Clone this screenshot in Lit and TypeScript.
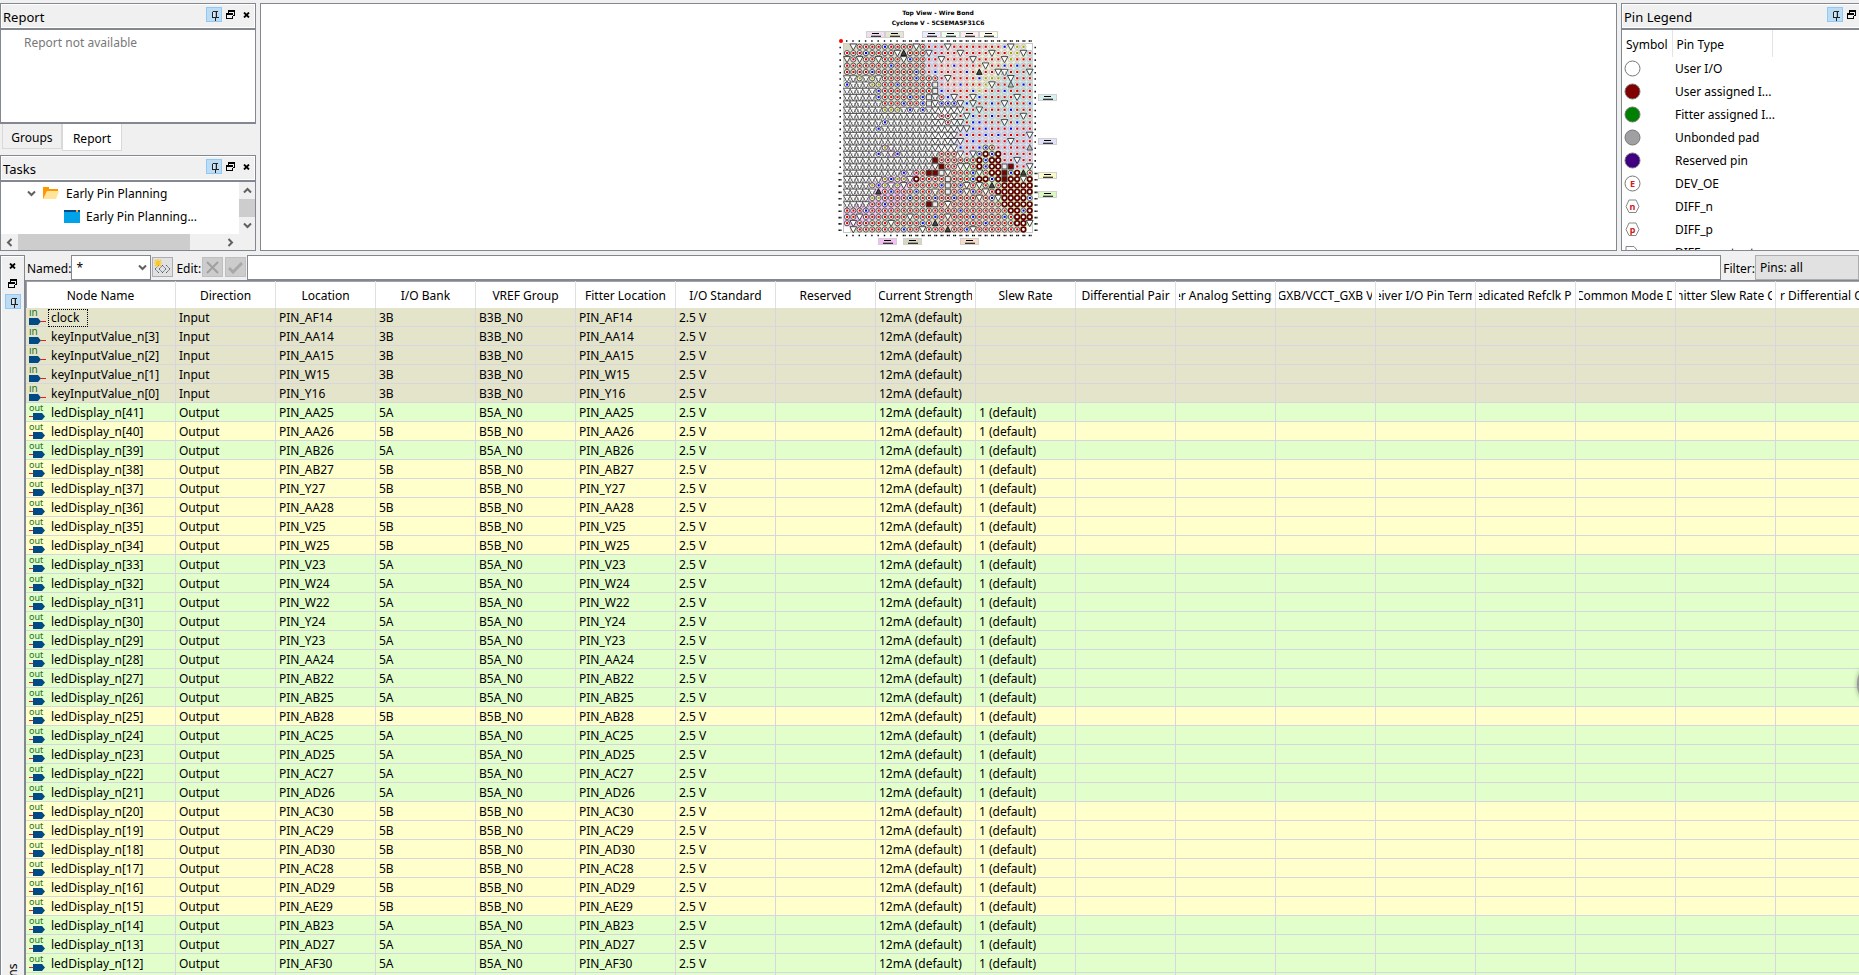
import { LitElement, html, svg, css } from "lit";
import { customElement } from "lit/decorators.js";

const pinIcon = html`<svg width="14" height="13" viewBox="0 0 14 13" shape-rendering="crispEdges">
  <path d="M5 3h5v6h-5z" fill="#9fb4c6"/><path d="M6 4h2v5h-2z" fill="#d6e8f7"/>
  <path d="M5 3h5M5 3v6M9 3v6M4 9h7M8 9v4" transform="translate(.5 .5)" fill="none" stroke="#222"/></svg>`;
const floatIcon = html`<svg width="9" height="9" viewBox="0 0 9 9" shape-rendering="crispEdges">
  <path d="M2 0h7v6h-3v-1h2v-3h-5v1h-1zM0 3h7v6h-7zM1 5v3h5v-3z" fill="#000" fill-rule="evenodd"/></svg>`;
const closeIcon = html`<svg width="7" height="6" viewBox="0 0 7 6">
  <path d="M1 .5l5 5M6 .5l-5 5" stroke="#000" stroke-width="1.8"/></svg>`;

const chevron = (d: string) =>
  html`<svg width="9" height="9" viewBox="0 0 9 9"><path d=${d} fill="none" stroke="#606060" stroke-width="2"/></svg>`;
const UP = "M1 6.5l3.5-3.5 3.5 3.5";
const DOWN = "M1 2.5l3.5 3.5 3.5-3.5";
const LEFT = "M6.5 1l-3.5 3.5 3.5 3.5";
const RIGHT = "M2.5 1l3.5 3.5-3.5 3.5";

const dockButtons = html`<div class="btns">
  <button class="pin" aria-label="Pin">${pinIcon}</button>
  <button aria-label="Float">${floatIcon}</button>
  <button aria-label="Close">${closeIcon}</button></div>`;

/* One character per ball of the package, row A first. */
const BALLS = [
  " vrrrrbrrrrvrrrrvrrrrrrrrbvyy ",
  "rrrbrrrrvkrrrvrrrrvrrrrvrryyvr",
  "vrvrrvrrrvbrrrrvrrrrvrrrrvyrrr",
  "rrrrrrrbrrrrrrrrrbrrrrvrrbrbrr",
  "rrrrbrrrrrrbrrbrrrrbrkrrvxrrrv",
  "xxyxyxrrrrrbrrrrvrrrrbyyyrvrrr",
  "bxxxyyrrbrrrrrsrrrbrrryvrr^rbr",
  "xxxxxbrrrrrrrrsbrrrrbyrrrbrrrr",
  "xxxxxbrrrrbrbsxrbvrrvbrrrrrvrr",
  "xxxxxxrrrbrrbsvbbbvbvrrbrvrrrb",
  "xxxxxxyyyxbxbxvvvvvrrvrrrrbrrr",
  "xxxxxxxxxxxxxxvrrvrvbrrbrrrrvr",
  "xxxxxxbxxxxxxxvvrvvrbbrrrvrbrr",
  "xxxxxbxxxxxxxxvvvvvvbrbrrrbrrr",
  "xxxxxxxxxxxxxxvvvvrbrrbrbrrrrv",
  "xxxxxxxxxxxxxxvxvvvrbrrrrrvrrr",
  "xxxxxxyxxxxxxxvvvvbrrbbrrrrrr^",
  "xxxxxbxxbxxxxxxrrrvrvbRbRrrrrr",
  "xxxxxxxxxxxxxxMrrrrrrRbRRrrvrr",
  "xxxxxxxxxxxxxxvMrrvvrRbRRsMrrv",
  "xxxxxxxxxbxrrMMsvrrrbvrRRMbRkr",
  "xxxxxxybyyxRrrrrsrrrbRRbRMRRvR",
  "xxxxybyxyvrrrrrbsrbvrvrkrRRRRR",
  "xxxxxkrbrrrbrrxrsrbvbrvrRRRRRR",
  "xxxxyyrrrrbrrrbrrbrrrvrbvRRRRb",
  "xxxxrrbrrrrrrMsrvrrrrrrrrRRRRR",
  "rrrbrrrrrrrrrrrrrrbrrrrrrrRRbR",
  "rrvrrrrrrrvrrrbrvrrrbrrrrbrRRR",
  "rvrrrrrvrrrrbrkrrrrrrrbrrrrRRv",
  " vrrrrrrrbrrvrrrkrrbvrrrrrrrR ",
];

/* I/O bank shading under each ball, same order. */
const BANKS = [
  "ggggggggggggglllpppppppcccccc ",
  "ggggggggggggglllppppppccccccct",
  "gggggggggggggllppppppcccccccct",
  "gggggggggggggllppppppccccccttt",
  "gggggggggggggllpppppcccccttttt",
  "wwgwgwggggggggwlppppccccctttt" + "t",
  "wwwwgggggggggwwlppppccccttttt" + "t",
  "wwwwwgggggggggwllpppccctttttt" + "t",
  "wwwwwggggggggwwwllppctttttttt" + "t",
  "wwwwwwggggggwwwwwwltttttttttt" + "t",
  "wwwwwwgggwwwwwwwwwwtttttttttt" + "t",
  "wwwwwwwwwwwwwwwwwwttttttttttt" + "t",
  "wwwwwwwwwwwwwwwwwwtttlltttttt" + "t",
  "wwwwwwwwwwwwwwwwwwllllllllllll",
  "wwwwwwwwwwwwwwwwwlllllllllllll",
  "wwwwwwwwwwwwwwwwwlllllllllllll",
  "wwwwwwvvwwwwwwwwwwlllleellllll",
  "wwwwwwwvvwwwwwwooowlleeeelllll",
  "wwwwwwwwwwwwwwoooooeeeeeelllll",
  "wwwwwwwwwwwwwwooooweeeeeelllll",
  "wwwwwwwwwvwvoooooooeeeeeeeeeee",
  "wwwwwwvvvvvvoooooooeeeeeeeeeee",
  "wwwwvvvvvvvgoooooooooeeeeeeeee",
  "wwwwwvvvvvggggooooooooooeeeeee",
  "wwwwvvvvvvggggooooooooooeeeeee",
  "wwvvvvvvvgggggooooooooooeeeeee",
  "vvvvvvvvggggggoooooooooooeeeee",
  "vvvvvvggggggggoooooooooooeeeee",
  "vvvvgggggggggggoooooooooooeeee",
  " ggggggggggggggoooooooooooooe ",
];
const TINT: Record<string, string> = {
  g: "#d9d9c6", w: "#fafafa", l: "#d6d6f2", p: "#f0dddd", c: "#eeeed8",
  t: "#c8e4e4", v: "#eebcee", o: "#edcfbc", e: "#d0ecb8",
};

const P = 6.3;
const ball = (c: string, x: number, y: number, bank: string) => {
  const soft = "lpct".includes(bank);
  const dot = (f: string) => svg`<circle cx=${x} cy=${y} r="2.6" fill="#fff" fill-opacity=${soft ? 0.55 : 0.9}
    stroke=${soft ? "#aaa" : "#555"} stroke-width=${soft ? 0.6 : 1}/>
    <rect x=${x - 0.9} y=${y - 1.1} width="2.1" height="2.1" fill=${f}/>`;
  switch (c) {
    case "r": return dot("#d40000");
    case "b": return dot("#0000e0");
    case "y": return dot("#a0a000");
    case "v": return svg`<path d="M${x - 3.4} ${y - 2.8}h6.8l-3.4 6.2z" fill="#fff" stroke="#333" stroke-width=".9"/>`;
    case "^": return svg`<path d="M${x - 2.8} ${y + 2.4}h5.6l-2.8-5.4z" fill="#bbb" stroke="#444" stroke-width=".9"/>`;
    case "k": return svg`<path d="M${x - 2.8} ${y + 2.4}h5.6l-2.8-5.4z" fill="#444" stroke="#111" stroke-width=".9"/>`;
    case "x": return svg`<path d="M${x - 3.6} ${y - 2.6}h7.2l-3.6 6.6z" fill="#fff" stroke="#3a3a3a" stroke-width=".8"/>
      <path d="M${x - 3} ${y + 3.2}l2-3.6M${x + 3} ${y + 3.2}l-2-3.6" stroke="#555" stroke-width=".6"/>`;
    case "s": return svg`<rect x=${x - 2.5} y=${y - 2.5} width="5" height="5" fill="#eee" stroke="#444" stroke-width=".9"/>`;
    case "M": return svg`<rect x=${x - 2.5} y=${y - 2.5} width="5" height="5" fill="#800000" stroke="#333" stroke-width=".9"/>`;
    case "R": return svg`<circle cx=${x} cy=${y} r="2.3" fill="#fff" stroke="#5c0000" stroke-width="1.7"/>`;
    default: return svg``;
  }
};
const bankTags: [number, number, string][] = [
  [46, 28, "#efe0ef"], [65, 28, "#e6e6d2"], [102, 28, "#ececfc"], [121, 28, "#eefcf0"], [140, 28, "#fceeee"], [159, 28, "#fcfcea"],
  [218, 91, "#d6f0f0"], [218, 135, "#e2e2fc"], [218, 169, "#fafac6"], [218, 188, "#dcf8c4"],
  [58, 235, "#f4c0f4"], [83, 235, "#d8d8c0"], [140, 235, "#f8dcc8"],
];
const idx = Array.from({ length: 30 }, (_, i) => i);
const chip = svg`
  <g font-family="DejaVu Sans" font-weight="bold" font-size="6" text-anchor="middle" fill="#000">
    <text x="118" y="11">Top View - Wire Bond</text>
    <text x="118" y="21">Cyclone V - 5CSEMA5F31C6</text></g>
  <rect x="23.5" y="39.500" width="189" height="189" fill="#fff" stroke="#c8c8c8"/>
  <circle cx="21" cy="37" r="2" fill="#f00"/>
  ${BANKS.map((r, j) => [...r].map((c, i) => TINT[c]
    ? svg`<rect x=${23.6 + i * P} y=${39.6 + j * P} width="6.4" height="6.4" fill=${TINT[c]}/>` : svg``))}
  ${BALLS.map((r, j) => [...r].map((c, i) => ball(c, 27 + i * P, 42.8 + j * P, BANKS[j][i])))}
  ${idx.map((i) => svg`<path d="M${26 + i * P} 37h${i < 9 ? 1.5 : 3}M${26 + i * P} 231.500h${i < 9 ? 1.5 : 3}
    M${i < 20 ? 19.5 : 18.5} ${43.5 + i * P}h${i < 20 ? 1.8 : 3}M214.5 ${43.5 + i * P}h${i < 20 ? 1.8 : 3}" stroke="#000" stroke-width="1.6" stroke-dasharray="1.4 .4"/>`)}
  ${bankTags.map(([x, y, f]) => svg`<rect x=${x + 0.5} y=${y - 0.5} width="18" height="6" fill=${f} stroke="#d0d0d0"/>
    <path d="M${x + 6} ${y + 1.5}h7M${x + 5} ${y + 4.2}h10" stroke="#000" stroke-width="1.1"/>`)}`;

const COLS = ["Node Name", "Direction", "Location", "I/O Bank", "VREF Group", "Fitter Location", "I/O Standard",
  "Reserved", "Current Strength", "Slew Rate", "Differential Pair", "er Analog Settings", "GXB/VCCT_GXB V",
  "eiver I/O Pin Term", "edicated Refclk Pi", "Common Mode D", "nitter Slew Rate C", "r Differential Ou"];

const INPUTS: [string, string][] = [["clock", "AF14"], ["keyInputValue_n[3]", "AA14"], ["keyInputValue_n[2]", "AA15"],
  ["keyInputValue_n[1]", "W15"], ["keyInputValue_n[0]", "Y16"]];
/* Location and bank of ledDisplay_n, counting down from bit 41. */
const LEDS = ("AA25A AA26B AB26A AB27B Y27B AA28B V25B W25B V23A W24A W22A Y24A Y23A AA24A AB22A AB25A AB28B " +
  "AC25A AD25A AC27A AD26A AC30B AC29B AD30B AC28B AD29B AE29B AB23A AD27A AF30A AF28A").split(" ");
type Row = { name: string; dir: string; pin: string; bank: string; slew: string; kind: string };
const ROWS: Row[] = [
  ...INPUTS.map(([name, pin]) => ({ name, dir: "Input", pin, bank: "3B", slew: "", kind: "in" })),
  ...LEDS.map((s, i) => {
    const b = s.slice(-1);
    return { name: `ledDisplay_n[${41 - i}]`, dir: "Output", pin: s.slice(0, -1), bank: "5" + b, slew: "1 (default)", kind: b === "A" ? "a" : "b" };
  }),
];

const inIcon = html`<svg class="io" width="17" height="17" viewBox="0 0 17 17">
  <text x="0" y="7" font-size="10">in</text>
  <path d="M12 12.5h5" stroke="#f01820"/><path d="M0 9h9l3 3.5-3 3.5h-9z" fill="#004a86"/></svg>`;
const outIcon = html`<svg class="io" width="17" height="17" viewBox="0 0 17 17">
  <text x="0" y="7" font-size="9">out</text>
  <path d="M0 12.5h5" stroke="#f01820"/><path d="M4 9h9l3 3.5-3 3.5h-9z" fill="#004a86"/></svg>`;

const circle = (f: string, t = "") => html`<svg width="17" height="17" viewBox="0 0 17 17">
  <circle cx="8.5" cy="8.5" r="7.5" fill=${f} stroke="#777"/>
  <text x="8.5" y="12" text-anchor="middle">${t}</text></svg>`;
const hexagon = (t: string) => html`<svg width="17" height="17" viewBox="0 0 17 17">
  <path d="M5 2h7l3 6.5-3 6h-7l-3-6z" fill="#fff" stroke="#888"/>
  <text x="8.5" y="12" text-anchor="middle">${t}</text></svg>`;
const halfTag = html`<svg width="17" height="17" viewBox="0 0 17 17">
  <path d="M2 2.500h8l5 6-5 6h-8z" fill="#fff" stroke="#888"/></svg>`;
const LEGEND = [
  [circle("#fff"), "User I/O"], [circle("#800000"), "User assigned I..."], [circle("#008000"), "Fitter assigned I..."],
  [circle("#a0a0a4"), "Unbonded pad"], [circle("#400080"), "Reserved pin"], [circle("#fff", "E"), "DEV_OE"],
  [hexagon("n"), "DIFF_n"], [hexagon("p"), "DIFF_p"], [halfTag, "DIFF_n output"],
];

@customElement("app-root")
export class AppRoot extends LitElement {
  static styles = css`
    :host { display: flex; flex-direction: column; height: 100vh; overflow: hidden; position: relative;
      background: #f0f0f0; color: #000; font: 12px/16px "Noto Sans", sans-serif; }
    * { box-sizing: border-box; }
    svg { display: block; flex: none; }
    button { border: 0; background: none; padding: 0; margin: 0; display: grid; place-items: center; width: 16px; height: 15px; }
    .top { display: flex; gap: 4px; padding-top: 3px; height: 251px; flex: none; }
    .left { width: 256px; flex: none; display: flex; flex-direction: column; }
    .center { flex: 1; background: #fff; border: 1px solid #83878f; display: flex; justify-content: center; overflow: hidden; }
    .right { width: 238px; flex: none; overflow: hidden; display: flex; }
    .panel { width: 256px; flex: none; display: flex; flex-direction: column; }
    .title { height: 25px; flex: none; border: 1px solid #83878f; border-bottom: 0; box-shadow: inset 0 0 0 1px #fff;
      display: flex; justify-content: space-between; padding: 3px 1px 0 2px; font-size: 13px; line-height: 20px; }
    .btns { display: flex; gap: 0; }
    .pin { background: #bcdcf4; border: 1px solid #90c8f6; }
    .body { flex: 1; min-height: 0; background: #fff; border: 1px solid #83878f; border-top-width: 2px; overflow: hidden; }
    .report { flex: none; height: 96px; color: #787878; padding: 5px 23px; border-bottom-width: 2px; }
    .tabs { display: flex; height: 31px; flex: none; padding-left: 2px; align-items: flex-start; }
    .tab { width: 60px; height: 25px; border: 1px solid #d9d9d9; border-top: 0; font: inherit; padding-top: 3px; }
    .tab.on { height: 27px; background: #fff; }
    .tasks { display: grid; grid-template: minmax(0, 1fr) 16px / minmax(0, 1fr) 16px; }
    .tree { overflow: hidden; }
    .node { height: 23px; display: flex; align-items: center; }
    .n1 { padding-left: 26px; gap: 7px; }
    .n2 { padding-left: 63px; gap: 6px; }
    .vbar, .hbar, .corner { background: #f0f0f0; }
    .vbar { display: grid; grid-template-rows: 17px 18px 17px; }
    .hbar { display: grid; grid-template-columns: 17px 172px 1fr 17px; }
    .bar { display: grid; place-items: center; }
    .thumb { background: #cdcdcd; }
    .legend { border-collapse: collapse; table-layout: fixed; width: 150px; }
    .legend th { font-weight: 400; text-align: left; height: 27px; border-right: 1px solid #e4e4e4; padding: 2px 0 0 4px; white-space: nowrap; }
    .legend td { height: 23px; padding: 0 0 0 3px; white-space: nowrap; }
    .legend td:first-child { padding-left: 2px; }
    .legend text { font: bold 9px "Noto Sans", sans-serif; fill: #d02020; }
    .bottom { flex: 1; min-height: 0; display: flex; padding-top: 4px; }
    .rail { width: 25px; flex: none; border: 1px solid #83878f; border-bottom: 0; box-shadow: inset 1px 1px 0 #fff;
      display: flex; flex-direction: column; align-items: center; padding: 2px 0 0; gap: 3px; }
    .rail .name { writing-mode: vertical-rl; transform: rotate(180deg); margin-top: auto; height: 12px; overflow: hidden;
      white-space: nowrap; display: flex; justify-content: flex-end; }
    .main { flex: 1; min-width: 0; display: flex; flex-direction: column; }
    .tools { height: 25px; flex: none; display: flex; align-items: stretch; }
    .tools label { padding: 6px 0 0 2px; white-space: nowrap; }
    .combo { position: relative; width: 80px; }
    .combo svg { position: absolute; right: 4px; top: 8px; pointer-events: none; }
    select, input { font: inherit; color: #000; border: 1px solid #83878f; border-radius: 0; background: #fff; margin: 0; padding: 0 4px; height: 25px; width: 100%; appearance: none; }
    .tool { width: 21px; height: 20px; border: 1px solid #adadad; background: #e1e1e1; margin: 2px 1px; }
    .tool:disabled { background: #ccc; border-color: #bfbfbf; }
    .edit { flex: 1; min-width: 0; }
    .filter { width: 104px; overflow: hidden; }
    .filter select { background: #e1e1e1; border-color: #adadad; }
    .grid { flex: 1; min-height: 0; overflow: hidden; border-top: 1px solid #83878f; border-left: 1px solid #83878f;
      box-shadow: inset 1px 1px 0 #a0a3aa; background: #fff; }
    .pins { border-collapse: separate; border-spacing: 0; table-layout: fixed; width: 1850px; }
    .pins col:first-child { width: 150px; }
    .pins th { height: 27px; padding: 3px 3px 0; font-weight: 400; border-right: 1px solid #e0e0e0; }
    .clip { display: flex; justify-content: center; overflow: hidden; white-space: nowrap; }
    .pins td { height: 19px; line-height: 17px; padding: 1px 0 0 3px; border-right: 1px solid #d6d6dc; border-bottom: 1px solid #d6d6dc; white-space: nowrap; }
    .in td { background: #e4e4cb; }
    .a td { background: #e2ffcb; }
    .b td { background: #ffffcb; }
    .cell { display: flex; align-items: center; height: 17px; gap: 2px; }
    .cell span { padding: 0 3px; }
    .cell .focus { outline: 1px dotted #000; outline-offset: -1px; padding-right: 9px; height: 18px; }
    .io text { font-family: "Noto Sans", sans-serif; fill: #207020; }
    .help { position: absolute; right: -46px; top: 660px; width: 48px; height: 48px; border-radius: 50%; background: #fff;
      border: 2px solid #999; box-shadow: 0 0 5px rgba(0,0,0,.35); }
  `;

  private panelTitle(t: string) {
    return html`<div class="title"><span>${t}</span>${dockButtons}</div>`;
  }

  render() {
    return html`
      <div class="top">
        <div class="left">
          ${this.panelTitle("Report")}
          <div class="body report">Report not available</div>
          <div class="tabs"><button class="tab">Groups</button><button class="tab on">Report</button></div>
          ${this.panelTitle("Tasks")}
          <div class="body tasks">
            <div class="tree">
              <div class="node n1">${chevron(DOWN)}
                <svg width="16" height="13" viewBox="0 0 16 13"><path d="M0 0h6v2h9v3H4L1 12H0z" fill="#ff9800"/><path d="M4 4h12l-3 8H0z" fill="#ffe49a"/></svg>
                <span>Early Pin Planning</span></div>
              <div class="node n2">
                <svg width="16" height="13" viewBox="0 0 16 13"><path d="M0 0h16v13H0z" fill="#00a2e8"/><path d="M0 0h16v2H0z" fill="#004a86"/><path d="M12 0h2v2h-2z" fill="#ffa030"/></svg>
                <span>Early Pin Planning...</span></div>
            </div>
            <div class="vbar"><div class="bar">${chevron(UP)}</div><div class="thumb"></div><div class="bar">${chevron(DOWN)}</div></div>
            <div class="hbar"><div class="bar">${chevron(LEFT)}</div><div class="thumb"></div><div></div><div class="bar">${chevron(RIGHT)}</div></div>
            <div class="corner"></div>
          </div>
        </div>
        <div class="center"><svg width="238" height="246" viewBox="0 0 238 246">${chip}</svg></div>
        <div class="right"><div class="panel">
          ${this.panelTitle("Pin Legend")}
          <div class="body">
            <table class="legend"><colgroup><col style="width:50px"><col style="width:100px"></colgroup>
              <thead><tr><th>Symbol</th><th>Pin Type</th></tr></thead>
              <tbody>${LEGEND.map(([icon, name]) => html`<tr><td>${icon}</td><td>${name}</td></tr>`)}</tbody>
            </table>
          </div>
        </div></div>
      </div>
      <div class="bottom">
        <div class="rail">
          <button aria-label="Close">${closeIcon}</button>
          <button aria-label="Float">${floatIcon}</button>
          <button class="pin" aria-label="Pin">${pinIcon}</button>
          <span class="name">All Pins</span>
        </div>
        <div class="main">
          <div class="tools">
            <label for="named">Named:</label>
            <div class="combo"><select id="named"><option>*</option></select>${chevron(DOWN)}</div>
            <button class="tool" aria-label="Node finder"><svg width="19" height="18" viewBox="0 0 19 18">
              <path d="M6 7l-4 4 4 4M10 7l-4 4 4 4M9 7l4 4-4 4M13 7l4 4-4 4" fill="none" stroke="#46586c" stroke-dasharray="1.500 .5"/>
              <path d="M5 1v8M1 5h8M2 2l6 6M8 2l-6 6" stroke="#ffc61a" stroke-width="1.2"/></svg></button>
            <label for="edit">Edit:</label>
            <button class="tool" disabled aria-label="Cancel"><svg width="13" height="13" viewBox="0 0 13 13"><path d="M1 1l11 11M12 1l-11 11" stroke="#a0a0a0" stroke-width="2"/></svg></button>
            <button class="tool" disabled aria-label="Accept"><svg width="15" height="13" viewBox="0 0 15 13"><path d="M1 7l4 4 9-9" fill="none" stroke="#a8a8a8" stroke-width="3"/></svg></button>
            <div class="edit"><input id="edit" type="text"></div>
            <label for="filter">Filter:</label>
            <div class="filter"><select id="filter"><option>Pins: all</option></select></div>
          </div>
          <div class="grid">
            <table class="pins">
              <colgroup>${COLS.map(() => html`<col>`)}</colgroup>
              <thead><tr>${COLS.map((c) => html`<th><div class="clip"><span>${c}</span></div></th>`)}</tr></thead>
              <tbody>${ROWS.map((r, i) => html`<tr class=${r.kind}>
                <td><div class="cell">${r.kind === "in" ? inIcon : outIcon}<span class=${i === 0 ? "focus" : ""}>${r.name}</span></div></td>
                <td>${r.dir}</td><td>PIN_${r.pin}</td><td>${r.bank}</td><td>B${r.bank}_N0</td><td>PIN_${r.pin}</td>
                <td>2.5 V</td><td></td><td>12mA (default)</td><td>${r.slew}</td>
                ${COLS.slice(10).map(() => html`<td></td>`)}</tr>`)}</tbody>
            </table>
          </div>
        </div>
      </div>
      <button class="help" aria-label="Help"></button>`;
  }
}
